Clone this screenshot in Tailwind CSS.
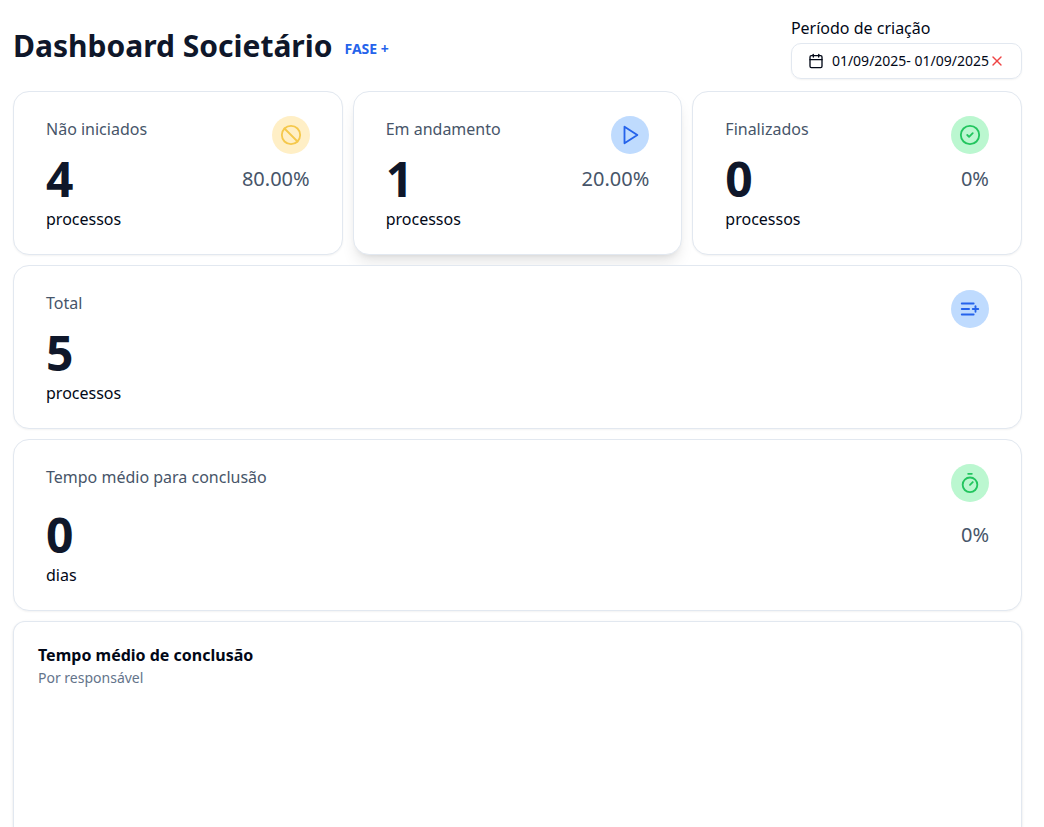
<!DOCTYPE html>
<html lang="pt-BR">
<head>
    <meta charset="UTF-8">
    <meta name="viewport" content="width=device-width, initial-scale=1.0">
    <title>Dashboard Societário</title>
    <script src="https://cdn.jsdelivr.net/npm/@tailwindcss/browser@4"></script>
</head>
<body class="h-screen overflow-hidden bg-white font-['Noto_Sans',sans-serif] text-[#020817]">
    <main class="flex h-full flex-col gap-[10px] pt-4 pl-[13px] pr-[22px]">
        <!-- Header -->
        <header class="flex items-center justify-between pb-[2px]">
            <div class="flex items-center gap-3 pb-1">
                <h1 class="text-[30px] leading-9 font-bold text-[#0f172a]">Dashboard Societário</h1>
                <a href="#" class="pt-[6px] text-sm font-bold text-[#2563eb]">FASE +</a>
            </div>
            <div class="flex flex-col gap-[3px]">
                <span id="period-label" class="text-base">Período de criação</span>
                <div class="flex h-9 items-center rounded-[10px] border border-[#e2e8f0] px-4 shadow-xs">
                    <button type="button" aria-describedby="period-label" class="flex items-center gap-2 text-sm">
                        <svg class="size-4" viewBox="0 0 24 24" fill="none" stroke="currentColor" stroke-width="2" stroke-linecap="round" stroke-linejoin="round"><path d="M8 2v4"/><path d="M16 2v4"/><rect width="18" height="18" x="3" y="4" rx="2"/><path d="M3 10h18"/></svg>
                        01/09/2025- 01/09/2025
                    </button>
                    <button type="button" aria-label="Limpar período" class="text-[#ef4444]">
                        <svg class="size-4" viewBox="0 0 24 24" fill="none" stroke="currentColor" stroke-width="2" stroke-linecap="round" stroke-linejoin="round"><path d="M18 6 6 18"/><path d="m6 6 12 12"/></svg>
                    </button>
                </div>
            </div>
        </header>

        <!-- Status cards -->
        <div class="grid grid-cols-3 gap-[10px]">
            <section class="rounded-2xl border border-[#e2e8f0] bg-white px-8 pt-6 pb-[23px] shadow-xs">
                <div class="flex items-start justify-between">
                    <h2 class="mt-px text-base text-[#475569]">Não iniciados</h2>
                    <span class="rounded-full bg-[#ffefc6] p-2 text-[#f5c84c]">
                        <svg class="size-[22px]" viewBox="0 0 24 24" fill="none" stroke="currentColor" stroke-width="2" stroke-linecap="round" stroke-linejoin="round"><circle cx="12" cy="12" r="10"/><path d="m4.9 4.9 14.2 14.2"/></svg>
                    </span>
                </div>
                <div class="mt-px flex items-center justify-between">
                    <p class="text-5xl font-bold text-[#0f172a]">4</p>
                    <p class="text-xl text-[#475569]">80.00%</p>
                </div>
                <p class="mt-1 text-base">processos</p>
            </section>

            <section class="rounded-2xl border border-[#e2e8f0] bg-white px-8 pt-6 pb-[23px] shadow-lg">
                <div class="flex items-start justify-between">
                    <h2 class="mt-px text-base text-[#475569]">Em andamento</h2>
                    <span class="rounded-full bg-[#bfdbfe] p-2 text-[#2563eb]">
                        <svg class="size-[22px]" viewBox="0 0 24 24" fill="none" stroke="currentColor" stroke-width="2" stroke-linecap="round" stroke-linejoin="round"><polygon points="6 3 20 12 6 21 6 3"/></svg>
                    </span>
                </div>
                <div class="mt-px flex items-center justify-between">
                    <p class="text-5xl font-bold text-[#0f172a]">1</p>
                    <p class="text-xl text-[#475569]">20.00%</p>
                </div>
                <p class="mt-1 text-base">processos</p>
            </section>

            <section class="rounded-2xl border border-[#e2e8f0] bg-white px-8 pt-6 pb-[23px] shadow-xs">
                <div class="flex items-start justify-between">
                    <h2 class="mt-px text-base text-[#475569]">Finalizados</h2>
                    <span class="rounded-full bg-[#bbf7d0] p-2 text-[#22c55e]">
                        <svg class="size-[22px]" viewBox="0 0 24 24" fill="none" stroke="currentColor" stroke-width="2" stroke-linecap="round" stroke-linejoin="round"><circle cx="12" cy="12" r="10"/><path d="m9 12 2 2 4-4"/></svg>
                    </span>
                </div>
                <div class="mt-px flex items-center justify-between">
                    <p class="text-5xl font-bold text-[#0f172a]">0</p>
                    <p class="text-xl text-[#475569]">0%</p>
                </div>
                <p class="mt-1 text-base">processos</p>
            </section>
        </div>

        <!-- Total -->
        <section class="rounded-2xl border border-[#e2e8f0] bg-white px-8 pt-6 pb-[23px] shadow-xs">
            <div class="flex items-start justify-between">
                <h2 class="mt-px text-base text-[#475569]">Total</h2>
                <span class="rounded-full bg-[#bfdbfe] p-2 text-[#2563eb]">
                    <svg class="size-[22px]" viewBox="0 0 24 24" fill="none" stroke="currentColor" stroke-width="2" stroke-linecap="round" stroke-linejoin="round"><path d="M11 12H3"/><path d="M16 6H3"/><path d="M16 18H3"/><path d="M18 9v6"/><path d="M21 12h-6"/></svg>
                </span>
            </div>
            <p class="mt-px text-5xl font-bold text-[#0f172a]">5</p>
            <p class="mt-1 text-base">processos</p>
        </section>

        <!-- Average time -->
        <section class="rounded-2xl border border-[#e2e8f0] bg-white px-8 pt-6 pb-[23px] shadow-xs">
            <div class="flex items-start justify-between">
                <h2 class="mt-px text-base text-[#475569]">Tempo médio para conclusão</h2>
                <span class="rounded-full bg-[#bbf7d0] p-2 text-[#22c55e]">
                    <svg class="size-[22px]" viewBox="0 0 24 24" fill="none" stroke="currentColor" stroke-width="2" stroke-linecap="round" stroke-linejoin="round"><path d="M10 2h4"/><path d="m12 14 3-3"/><circle cx="12" cy="14" r="8"/></svg>
                </span>
            </div>
            <div class="mt-[9px] flex items-center justify-between">
                <p class="text-5xl font-bold text-[#0f172a]">0</p>
                <p class="text-xl text-[#475569]">0%</p>
            </div>
            <p class="mt-1 text-base">dias</p>
        </section>

        <!-- Chart by person in charge -->
        <section class="flex-1 rounded-t-xl border border-b-0 border-[#e2e8f0] bg-white p-6 shadow-sm">
            <h2 class="text-base leading-[18px] font-bold">Tempo médio de conclusão</h2>
            <p class="mt-1 text-sm text-[#64748b]">Por responsável</p>
        </section>
    </main>
</body>
</html>
